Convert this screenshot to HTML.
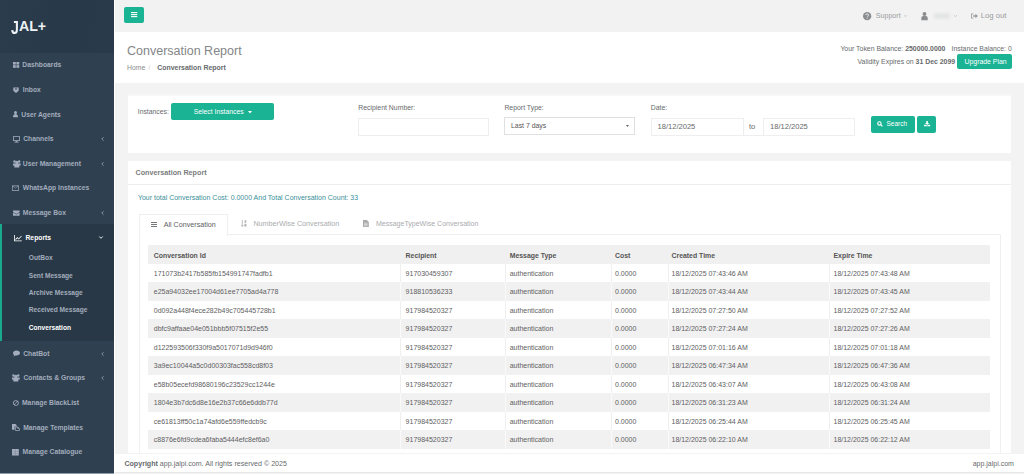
<!DOCTYPE html>
<html><head><meta charset="utf-8"><style>
*{box-sizing:border-box;margin:0;padding:0}
html,body{width:1024px;height:474px;overflow:hidden;background:#f3f3f4;font-family:"Liberation Sans",sans-serif;color:#676a6c}
.a{position:absolute;white-space:nowrap;line-height:10px}
#side{position:absolute;left:0;top:0;width:114px;height:473px;background:#2f4050}
#logo{position:absolute;left:0;top:0;width:114px;height:53px;background:linear-gradient(100deg,#2b3c4c 0%,#283949 50%,#293a4a 100%)}
#active{position:absolute;left:0;top:224px;width:114px;height:117px;background:#293846;border-left:2px solid #19aa8d}
#top{position:absolute;left:114px;top:0;width:910px;height:32.5px;background:#f2f2f2}
.btn{position:absolute;background:#1ab394;border-radius:2px;color:#fff}
#head{position:absolute;left:114px;top:32px;width:910px;height:51px;background:#fff}
.ibox{position:absolute;background:#fff}
.inp{position:absolute;background:#fff;border:1px solid #eeeeee}
svg{position:absolute;overflow:visible}
#foot{position:absolute;left:114px;top:453px;width:910px;height:20px;background:#fff;border-top:1px solid #f3f3f3;border-bottom:1px solid #e8e8e8}
</style></head><body>
<div class="ibox" style="left:128px;top:94px;width:883px;height:59px;border-top:2px solid #f7f7f7"></div><div class="a" style="left:137.8px;top:106.90px;font-size:6.8px">Instances:</div><div class="btn" style="left:171px;top:103px;width:103px;height:17px"></div><div class="a" style="left:193.75px;top:106.60px;font-size:6.8px;color:#fff">Select Instances</div><svg style="left:248px;top:110.5px" width="4" height="3" viewBox="0 0 4 3" fill="#fff"><path d="M0 0h4l-2 2.4z"/></svg><div class="a" style="left:358.2px;top:103.20px;font-size:6.9px">Recipient Number:</div><div class="inp" style="left:357.5px;top:117.5px;width:131px;height:18px"></div><div class="a" style="left:504.4px;top:103.20px;font-size:6.9px">Report Type:</div><div class="inp" style="left:504px;top:117.3px;width:131px;height:17.3px;border-color:#e0e0e0"></div><div class="a" style="left:511px;top:121.30px;font-size:6.9px;color:#555">Last 7 days</div><svg style="left:626px;top:124.5px" width="3" height="2" viewBox="0 0 3 2" fill="#666"><path d="M0 0h3l-1.5 2z"/></svg><div class="a" style="left:650.8px;top:103.20px;font-size:6.9px">Date:</div><div class="inp" style="left:651px;top:117.5px;width:204px;height:18px"></div><div style="position:absolute;left:742.5px;top:118px;width:21px;height:17px;background:#fff;border-left:1px solid #eeeeee;border-right:1px solid #eeeeee"></div><div class="a" style="left:657.5px;top:121.70px;font-size:7.55px;color:#676a6c">18/12/2025</div><div class="a" style="left:749px;top:121.70px;font-size:7.55px;color:#676a6c">to</div><div class="a" style="left:770px;top:121.70px;font-size:7.55px;color:#676a6c">18/12/2025</div><div class="btn" style="left:871px;top:115.5px;width:44px;height:17.6px"></div><svg style="left:877px;top:121.3px" width="6" height="6" viewBox="0 0 6 6" fill="none" stroke="#fff" stroke-width="1.1"><circle cx="2.4" cy="2.4" r="1.7"/><path d="M3.7 3.7L5.4 5.4"/></svg><div class="a" style="left:886.5px;top:119.20px;font-size:6.5px;color:#fff">Search</div><div class="btn" style="left:917.2px;top:115.5px;width:19.3px;height:17.6px"></div><svg style="left:924px;top:120.8px" width="6.2" height="5.4" viewBox="0 0 7 6" fill="#fff"><path d="M2.6 0h1.8v2.2h1.5l-2.4 2.2-2.4-2.2h1.5z"/><path d="M0 4.2h1.8l1.7 1 1.7-1h1.8v1.8h-7z"/></svg><div class="ibox" style="left:128px;top:160.5px;width:883px;height:300px"></div><div style="position:absolute;left:128px;top:184px;width:883px;height:1px;background:#eeeeee"></div><div class="a" style="left:135.5px;top:167.60px;font-size:7.2px;font-weight:700;color:#7a7c7e">Conversation Report</div><div class="a" style="left:137.9px;top:193.40px;font-size:7.0px;color:#3b8f98">Your total Conversation Cost: 0.0000 And Total Conversation Count: 33</div><div style="position:absolute;left:138.5px;top:233.5px;width:862px;height:1px;background:#eeeeee"></div><div style="position:absolute;left:138.5px;top:213.5px;width:89px;height:22px;background:#fff;border:1px solid #efefef;border-bottom:none"></div><div style="position:absolute;left:138.5px;top:234px;width:862px;height:240px;border-left:1px solid #f0f0f0;border-right:1px solid #f0f0f0"></div><svg style="left:151px;top:222px" width="6" height="5" viewBox="0 0 6 5" fill="#676a6c"><rect x="0" y="0" width="6" height="0.9"/><rect x="0" y="2" width="6" height="0.9"/><rect x="0" y="4" width="6" height="0.9"/></svg><div class="a" style="left:163.7px;top:219.80px;font-size:7.15px;color:#5e6062">All Conversation</div><svg style="left:240.7px;top:220.2px" width="6" height="7" viewBox="0 0 6 7"><path d="M1.3 0v6.4M0.2 5.1l1.1 1.4 1.1-1.4" fill="none" stroke="#b0b2b4" stroke-width="0.8"/><rect x="3.6" y="0.2" width="1.6" height="2.6" fill="#b0b2b4"/><rect x="3.4" y="3.8" width="2" height="2.8" fill="#b0b2b4"/></svg><div class="a" style="left:253.4px;top:219.00px;font-size:7.2px;color:#a9abad">NumberWise Conversation</div><svg style="left:363.2px;top:220.2px" width="6" height="7" viewBox="0 0 6 7"><path d="M0 0h3.8l2 2v5h-5.8z" fill="#a9abad"/><path d="M1 3.2h3.6M1 4.5h3.6M1 5.8h3.6" stroke="#fff" stroke-width="0.5"/></svg><div class="a" style="left:376px;top:219.00px;font-size:7.0px;color:#a9abad">MessageTypeWise Conversation</div><div style="position:absolute;left:148px;top:245px;width:842px;height:19.5px;background:#f0f0f0;border-radius:1px"></div><div class="a" style="left:153.8px;top:251.20px;font-size:6.9px;font-weight:700;color:#555">Conversation Id</div><div class="a" style="left:405.6px;top:251.20px;font-size:6.9px;font-weight:700;color:#555">Recipient</div><div class="a" style="left:509.7px;top:251.20px;font-size:6.9px;font-weight:700;color:#555">Message Type</div><div class="a" style="left:615px;top:251.20px;font-size:6.9px;font-weight:700;color:#555">Cost</div><div class="a" style="left:671.5px;top:251.20px;font-size:6.9px;font-weight:700;color:#555">Created Time</div><div class="a" style="left:833.5px;top:251.20px;font-size:6.9px;font-weight:700;color:#555">Expire Time</div><div style="position:absolute;left:148px;top:264.00px;width:842px;height:18.49px;background:#ffffff"></div><div style="position:absolute;left:400px;top:264.00px;width:1px;height:18.49px;background:#efefef"></div><div style="position:absolute;left:505px;top:264.00px;width:1px;height:18.49px;background:#efefef"></div><div style="position:absolute;left:611px;top:264.00px;width:1px;height:18.49px;background:#efefef"></div><div style="position:absolute;left:668px;top:264.00px;width:1px;height:18.49px;background:#efefef"></div><div style="position:absolute;left:829px;top:264.00px;width:1px;height:18.49px;background:#efefef"></div><div class="a" style="left:153.8px;top:269.00px;font-size:7.0px;color:#5e6062">171073b2417b585fb154991747fadfb1</div><div class="a" style="left:405.6px;top:269.00px;font-size:7.0px;color:#5e6062">917030459307</div><div class="a" style="left:509.7px;top:269.00px;font-size:7.0px;color:#5e6062">authentication</div><div class="a" style="left:615px;top:269.00px;font-size:7.0px;color:#5e6062">0.0000</div><div class="a" style="left:671.5px;top:269.00px;font-size:7.0px;color:#5e6062">18/12/2025 07:43:46 AM</div><div class="a" style="left:833.5px;top:269.00px;font-size:7.0px;color:#5e6062">18/12/2025 07:43:48 AM</div><div style="position:absolute;left:148px;top:282.49px;width:842px;height:18.49px;background:#f1f1f1"></div><div style="position:absolute;left:400px;top:282.49px;width:1px;height:18.49px;background:#fafafa"></div><div style="position:absolute;left:505px;top:282.49px;width:1px;height:18.49px;background:#fafafa"></div><div style="position:absolute;left:611px;top:282.49px;width:1px;height:18.49px;background:#fafafa"></div><div style="position:absolute;left:668px;top:282.49px;width:1px;height:18.49px;background:#fafafa"></div><div style="position:absolute;left:829px;top:282.49px;width:1px;height:18.49px;background:#fafafa"></div><div class="a" style="left:153.8px;top:287.49px;font-size:7.0px;color:#5e6062">e25a94032ee17004d61ee7705ad4a778</div><div class="a" style="left:405.6px;top:287.49px;font-size:7.0px;color:#5e6062">918810536233</div><div class="a" style="left:509.7px;top:287.49px;font-size:7.0px;color:#5e6062">authentication</div><div class="a" style="left:615px;top:287.49px;font-size:7.0px;color:#5e6062">0.0000</div><div class="a" style="left:671.5px;top:287.49px;font-size:7.0px;color:#5e6062">18/12/2025 07:43:44 AM</div><div class="a" style="left:833.5px;top:287.49px;font-size:7.0px;color:#5e6062">18/12/2025 07:43:45 AM</div><div style="position:absolute;left:148px;top:300.98px;width:842px;height:18.49px;background:#ffffff"></div><div style="position:absolute;left:400px;top:300.98px;width:1px;height:18.49px;background:#efefef"></div><div style="position:absolute;left:505px;top:300.98px;width:1px;height:18.49px;background:#efefef"></div><div style="position:absolute;left:611px;top:300.98px;width:1px;height:18.49px;background:#efefef"></div><div style="position:absolute;left:668px;top:300.98px;width:1px;height:18.49px;background:#efefef"></div><div style="position:absolute;left:829px;top:300.98px;width:1px;height:18.49px;background:#efefef"></div><div class="a" style="left:153.8px;top:305.98px;font-size:7.0px;color:#5e6062">0d092a448f4ece282b49c705445728b1</div><div class="a" style="left:405.6px;top:305.98px;font-size:7.0px;color:#5e6062">917984520327</div><div class="a" style="left:509.7px;top:305.98px;font-size:7.0px;color:#5e6062">authentication</div><div class="a" style="left:615px;top:305.98px;font-size:7.0px;color:#5e6062">0.0000</div><div class="a" style="left:671.5px;top:305.98px;font-size:7.0px;color:#5e6062">18/12/2025 07:27:50 AM</div><div class="a" style="left:833.5px;top:305.98px;font-size:7.0px;color:#5e6062">18/12/2025 07:27:52 AM</div><div style="position:absolute;left:148px;top:319.47px;width:842px;height:18.49px;background:#f1f1f1"></div><div style="position:absolute;left:400px;top:319.47px;width:1px;height:18.49px;background:#fafafa"></div><div style="position:absolute;left:505px;top:319.47px;width:1px;height:18.49px;background:#fafafa"></div><div style="position:absolute;left:611px;top:319.47px;width:1px;height:18.49px;background:#fafafa"></div><div style="position:absolute;left:668px;top:319.47px;width:1px;height:18.49px;background:#fafafa"></div><div style="position:absolute;left:829px;top:319.47px;width:1px;height:18.49px;background:#fafafa"></div><div class="a" style="left:153.8px;top:324.47px;font-size:7.0px;color:#5e6062">dbfc9affaae04e051bbb5f07515f2e55</div><div class="a" style="left:405.6px;top:324.47px;font-size:7.0px;color:#5e6062">917984520327</div><div class="a" style="left:509.7px;top:324.47px;font-size:7.0px;color:#5e6062">authentication</div><div class="a" style="left:615px;top:324.47px;font-size:7.0px;color:#5e6062">0.0000</div><div class="a" style="left:671.5px;top:324.47px;font-size:7.0px;color:#5e6062">18/12/2025 07:27:24 AM</div><div class="a" style="left:833.5px;top:324.47px;font-size:7.0px;color:#5e6062">18/12/2025 07:27:26 AM</div><div style="position:absolute;left:148px;top:337.96px;width:842px;height:18.49px;background:#ffffff"></div><div style="position:absolute;left:400px;top:337.96px;width:1px;height:18.49px;background:#efefef"></div><div style="position:absolute;left:505px;top:337.96px;width:1px;height:18.49px;background:#efefef"></div><div style="position:absolute;left:611px;top:337.96px;width:1px;height:18.49px;background:#efefef"></div><div style="position:absolute;left:668px;top:337.96px;width:1px;height:18.49px;background:#efefef"></div><div style="position:absolute;left:829px;top:337.96px;width:1px;height:18.49px;background:#efefef"></div><div class="a" style="left:153.8px;top:342.96px;font-size:7.0px;color:#5e6062">d122593506f330f9a5017071d9d946f0</div><div class="a" style="left:405.6px;top:342.96px;font-size:7.0px;color:#5e6062">917984520327</div><div class="a" style="left:509.7px;top:342.96px;font-size:7.0px;color:#5e6062">authentication</div><div class="a" style="left:615px;top:342.96px;font-size:7.0px;color:#5e6062">0.0000</div><div class="a" style="left:671.5px;top:342.96px;font-size:7.0px;color:#5e6062">18/12/2025 07:01:16 AM</div><div class="a" style="left:833.5px;top:342.96px;font-size:7.0px;color:#5e6062">18/12/2025 07:01:18 AM</div><div style="position:absolute;left:148px;top:356.45px;width:842px;height:18.49px;background:#f1f1f1"></div><div style="position:absolute;left:400px;top:356.45px;width:1px;height:18.49px;background:#fafafa"></div><div style="position:absolute;left:505px;top:356.45px;width:1px;height:18.49px;background:#fafafa"></div><div style="position:absolute;left:611px;top:356.45px;width:1px;height:18.49px;background:#fafafa"></div><div style="position:absolute;left:668px;top:356.45px;width:1px;height:18.49px;background:#fafafa"></div><div style="position:absolute;left:829px;top:356.45px;width:1px;height:18.49px;background:#fafafa"></div><div class="a" style="left:153.8px;top:361.45px;font-size:7.0px;color:#5e6062">3a9ec10044a5c0d00303fac558cd8f03</div><div class="a" style="left:405.6px;top:361.45px;font-size:7.0px;color:#5e6062">917984520327</div><div class="a" style="left:509.7px;top:361.45px;font-size:7.0px;color:#5e6062">authentication</div><div class="a" style="left:615px;top:361.45px;font-size:7.0px;color:#5e6062">0.0000</div><div class="a" style="left:671.5px;top:361.45px;font-size:7.0px;color:#5e6062">18/12/2025 06:47:34 AM</div><div class="a" style="left:833.5px;top:361.45px;font-size:7.0px;color:#5e6062">18/12/2025 06:47:36 AM</div><div style="position:absolute;left:148px;top:374.94px;width:842px;height:18.49px;background:#ffffff"></div><div style="position:absolute;left:400px;top:374.94px;width:1px;height:18.49px;background:#efefef"></div><div style="position:absolute;left:505px;top:374.94px;width:1px;height:18.49px;background:#efefef"></div><div style="position:absolute;left:611px;top:374.94px;width:1px;height:18.49px;background:#efefef"></div><div style="position:absolute;left:668px;top:374.94px;width:1px;height:18.49px;background:#efefef"></div><div style="position:absolute;left:829px;top:374.94px;width:1px;height:18.49px;background:#efefef"></div><div class="a" style="left:153.8px;top:379.94px;font-size:7.0px;color:#5e6062">e58b05ecefd98680196c23529cc1244e</div><div class="a" style="left:405.6px;top:379.94px;font-size:7.0px;color:#5e6062">917984520327</div><div class="a" style="left:509.7px;top:379.94px;font-size:7.0px;color:#5e6062">authentication</div><div class="a" style="left:615px;top:379.94px;font-size:7.0px;color:#5e6062">0.0000</div><div class="a" style="left:671.5px;top:379.94px;font-size:7.0px;color:#5e6062">18/12/2025 06:43:07 AM</div><div class="a" style="left:833.5px;top:379.94px;font-size:7.0px;color:#5e6062">18/12/2025 06:43:08 AM</div><div style="position:absolute;left:148px;top:393.43px;width:842px;height:18.49px;background:#f1f1f1"></div><div style="position:absolute;left:400px;top:393.43px;width:1px;height:18.49px;background:#fafafa"></div><div style="position:absolute;left:505px;top:393.43px;width:1px;height:18.49px;background:#fafafa"></div><div style="position:absolute;left:611px;top:393.43px;width:1px;height:18.49px;background:#fafafa"></div><div style="position:absolute;left:668px;top:393.43px;width:1px;height:18.49px;background:#fafafa"></div><div style="position:absolute;left:829px;top:393.43px;width:1px;height:18.49px;background:#fafafa"></div><div class="a" style="left:153.8px;top:398.43px;font-size:7.0px;color:#5e6062">1804e3b7dc6d8e16e2b37c66e6ddb77d</div><div class="a" style="left:405.6px;top:398.43px;font-size:7.0px;color:#5e6062">917984520327</div><div class="a" style="left:509.7px;top:398.43px;font-size:7.0px;color:#5e6062">authentication</div><div class="a" style="left:615px;top:398.43px;font-size:7.0px;color:#5e6062">0.0000</div><div class="a" style="left:671.5px;top:398.43px;font-size:7.0px;color:#5e6062">18/12/2025 06:31:23 AM</div><div class="a" style="left:833.5px;top:398.43px;font-size:7.0px;color:#5e6062">18/12/2025 06:31:24 AM</div><div style="position:absolute;left:148px;top:411.92px;width:842px;height:18.49px;background:#ffffff"></div><div style="position:absolute;left:400px;top:411.92px;width:1px;height:18.49px;background:#efefef"></div><div style="position:absolute;left:505px;top:411.92px;width:1px;height:18.49px;background:#efefef"></div><div style="position:absolute;left:611px;top:411.92px;width:1px;height:18.49px;background:#efefef"></div><div style="position:absolute;left:668px;top:411.92px;width:1px;height:18.49px;background:#efefef"></div><div style="position:absolute;left:829px;top:411.92px;width:1px;height:18.49px;background:#efefef"></div><div class="a" style="left:153.8px;top:416.92px;font-size:7.0px;color:#5e6062">ce61813ff50c1a74afd6e559ffedcb9c</div><div class="a" style="left:405.6px;top:416.92px;font-size:7.0px;color:#5e6062">917984520327</div><div class="a" style="left:509.7px;top:416.92px;font-size:7.0px;color:#5e6062">authentication</div><div class="a" style="left:615px;top:416.92px;font-size:7.0px;color:#5e6062">0.0000</div><div class="a" style="left:671.5px;top:416.92px;font-size:7.0px;color:#5e6062">18/12/2025 06:25:44 AM</div><div class="a" style="left:833.5px;top:416.92px;font-size:7.0px;color:#5e6062">18/12/2025 06:25:45 AM</div><div style="position:absolute;left:148px;top:430.41px;width:842px;height:18.49px;background:#f1f1f1"></div><div style="position:absolute;left:400px;top:430.41px;width:1px;height:18.49px;background:#fafafa"></div><div style="position:absolute;left:505px;top:430.41px;width:1px;height:18.49px;background:#fafafa"></div><div style="position:absolute;left:611px;top:430.41px;width:1px;height:18.49px;background:#fafafa"></div><div style="position:absolute;left:668px;top:430.41px;width:1px;height:18.49px;background:#fafafa"></div><div style="position:absolute;left:829px;top:430.41px;width:1px;height:18.49px;background:#fafafa"></div><div class="a" style="left:153.8px;top:435.41px;font-size:7.0px;color:#5e6062">c8876e6fd9cdea6faba5444efc8ef6a0</div><div class="a" style="left:405.6px;top:435.41px;font-size:7.0px;color:#5e6062">917984520327</div><div class="a" style="left:509.7px;top:435.41px;font-size:7.0px;color:#5e6062">authentication</div><div class="a" style="left:615px;top:435.41px;font-size:7.0px;color:#5e6062">0.0000</div><div class="a" style="left:671.5px;top:435.41px;font-size:7.0px;color:#5e6062">18/12/2025 06:22:10 AM</div><div class="a" style="left:833.5px;top:435.41px;font-size:7.0px;color:#5e6062">18/12/2025 06:22:12 AM</div>
<div id="side"><div id="logo"></div><div class="a" style="left:11px;top:19px;font-size:14.2px;line-height:14px;font-weight:700;color:#eef2f5"><span style="display:inline-block;transform:scaleY(1.3);transform-origin:50% 20%">J</span>AL+</div><div id="active"></div><svg style="left:12.7px;top:62.3px" width="8" height="8" viewBox="0 0 8 8" fill="#a3adbd"><rect x="0" y="0" width="2.8" height="2.6"/><rect x="3.4" y="0" width="2.8" height="2.6"/><rect x="0" y="3.2" width="2.8" height="2.6"/><rect x="3.4" y="3.2" width="2.8" height="2.6"/></svg><div class="a" style="left:22.3px;top:60.20px;font-size:6.75px;font-weight:700;color:#a3adbd">Dashboards</div><svg style="left:13px;top:86.8px" width="8" height="8" viewBox="0 0 8 8" fill="#a3adbd"><path d="M0.3 0.5h5.4v3.2l-2.7 2.2-2.7-2.2z"/><path d="M1.6 1.6h2.8l-1.4 1.4z" fill="#2f4050"/></svg><div class="a" style="left:22.8px;top:85.00px;font-size:6.75px;font-weight:700;color:#a3adbd">Inbox</div><svg style="left:12.7px;top:111.3px" width="8" height="8" viewBox="0 0 8 8" fill="#a3adbd"><circle cx="2.5" cy="1.6" r="1.5"/><path d="M0 6.2c0-2.2 1-3.3 2.5-3.3s2.5 1.1 2.5 3.3z"/></svg><div class="a" style="left:21.3px;top:109.50px;font-size:6.75px;font-weight:700;color:#a3adbd">User Agents</div><svg style="left:12.7px;top:135.8px" width="8" height="8" viewBox="0 0 8 8" fill="#a3adbd"><path d="M0 0.3h7v4.6h-2.6v0.9h1.2v0.6h-4.2v-0.6h1.2v-0.9h-2.6z M0.8 1v3.2h5.4v-3.2z"/></svg><div class="a" style="left:23.2px;top:134.10px;font-size:6.75px;font-weight:700;color:#a3adbd">Channels</div><svg style="left:100.5px;top:137.1px" width="3" height="4" viewBox="0 0 3 4" fill="none" stroke="#a3adbd" stroke-width="0.8"><path d="M2.5 0.3L0.8 2L2.5 3.7"/></svg><svg style="left:12.7px;top:160.2px" width="8" height="8" viewBox="0 0 8 8" fill="#a3adbd"><circle cx="1.5" cy="1.5" r="1.2"/><circle cx="6.2" cy="1.5" r="1.2"/><circle cx="3.85" cy="2.4" r="1.6"/><path d="M0 3.4h7.7v2.2h-1.4v2h-5v-2h-1.3z"/></svg><div class="a" style="left:22.8px;top:158.60px;font-size:6.75px;font-weight:700;color:#a3adbd">User Management</div><svg style="left:100.5px;top:161.6px" width="3" height="4" viewBox="0 0 3 4" fill="none" stroke="#a3adbd" stroke-width="0.8"><path d="M2.5 0.3L0.8 2L2.5 3.7"/></svg><svg style="left:12.2px;top:185.0px" width="8" height="8" viewBox="0 0 8 8" fill="#a3adbd"><path d="M0 0.5h7v5.2h-7z M0.7 1.2v3.8h5.6v-3.8l-2.8 2.2z M1.2 1.2l2.3 1.8 2.3-1.8z" fill-rule="evenodd"/></svg><div class="a" style="left:22.8px;top:183.30px;font-size:6.75px;font-weight:700;color:#a3adbd">WhatsApp Instances</div><svg style="left:12.7px;top:209.6px" width="8" height="8" viewBox="0 0 8 8" fill="#a3adbd"><path d="M0 0.5h6.6v1.4l-3.3 2-3.3-2z"/><path d="M0 2.6l3.3 2 3.3-2v3.2h-6.6z"/></svg><div class="a" style="left:22.8px;top:207.80px;font-size:6.75px;font-weight:700;color:#a3adbd">Message Box</div><svg style="left:100.5px;top:210.8px" width="3" height="4" viewBox="0 0 3 4" fill="none" stroke="#a3adbd" stroke-width="0.8"><path d="M2.5 0.3L0.8 2L2.5 3.7"/></svg><svg style="left:12.7px;top:350.2px" width="8" height="8" viewBox="0 0 8 8" fill="#a3adbd"><path d="M3.5 0.5c2 0 3.5 1.1 3.5 2.5s-1.5 2.5-3.5 2.5c-0.4 0-0.8 0-1.1-0.1l-1.8 1.2 0.5-1.5c-0.7-0.5-1.1-1.2-1.1-2.1 0-1.4 1.5-2.5 3.5-2.5z"/></svg><div class="a" style="left:23.2px;top:348.60px;font-size:6.75px;font-weight:700;color:#a3adbd">ChatBot</div><svg style="left:100.5px;top:351.6px" width="3" height="4" viewBox="0 0 3 4" fill="none" stroke="#a3adbd" stroke-width="0.8"><path d="M2.5 0.3L0.8 2L2.5 3.7"/></svg><svg style="left:12.4px;top:374.4px" width="8" height="8" viewBox="0 0 8 8" fill="#a3adbd"><circle cx="1.5" cy="1.5" r="1.2"/><circle cx="6.2" cy="1.5" r="1.2"/><circle cx="3.85" cy="2.4" r="1.6"/><path d="M0 3.4h7.7v2.2h-1.4v2h-5v-2h-1.3z"/></svg><div class="a" style="left:23.5px;top:373.10px;font-size:6.75px;font-weight:700;color:#a3adbd">Contacts &amp; Groups</div><svg style="left:100.5px;top:376.1px" width="3" height="4" viewBox="0 0 3 4" fill="none" stroke="#a3adbd" stroke-width="0.8"><path d="M2.5 0.3L0.8 2L2.5 3.7"/></svg><svg style="left:12.7px;top:399.7px" width="8" height="8" viewBox="0 0 8 8" fill="#a3adbd"><path d="M2.9 0.2a2.8 2.8 0 1 1 0 5.6a2.8 2.8 0 1 1 0-5.6z M2.9 1a2 2 0 0 0-1.6 3.2l2.8-2.8a2 2 0 0 0-1.2-0.4z M4.5 1.8l-2.8 2.8a2 2 0 0 0 2.8-2.8z" fill-rule="evenodd"/></svg><div class="a" style="left:22.0px;top:397.70px;font-size:6.75px;font-weight:700;color:#a3adbd">Manage BlackList</div><svg style="left:12.4px;top:423.8px" width="8" height="8" viewBox="0 0 8 8" fill="#a3adbd"><path d="M0 0h3.4l1.4 1.4v1h-2.2v3.4h-2.6z"/><path d="M3.2 2.8h2.8l1.7 1.7v2.3h-4.5z M3.9 3.5v2.6h3.1v-1.3h-1.4v-1.3z" fill-rule="evenodd"/></svg><div class="a" style="left:23.2px;top:422.60px;font-size:6.75px;font-weight:700;color:#a3adbd">Manage Templates</div><svg style="left:12.4px;top:448.5px" width="8" height="8" viewBox="0 0 8 8" fill="#a3adbd"><rect x="0" y="0" width="6.8" height="6.5"/><path d="M0.6 2.2h5.6v0.4h-5.6z M0.6 4.2h5.6v0.4h-5.6z M3.2 0.6v5.4h0.4v-5.4z" fill="#6b7787"/></svg><div class="a" style="left:22.6px;top:447.20px;font-size:6.75px;font-weight:700;color:#a3adbd">Manage Catalogue</div><svg style="left:13.7px;top:234.6px" width="8" height="7" viewBox="0 0 8 7" fill="#fff"><path d="M0 0h0.8v5.4h7v0.8h-7.8z"/><path d="M1.3 4.3l2-2.2 1.4 1.3 2.5-2.7 0.6 0.6-3.1 3.3-1.4-1.3-1.5 1.6z"/></svg><div class="a" style="left:25.5px;top:232.80px;font-size:6.75px;font-weight:700;color:#fff">Reports</div><svg style="left:99.3px;top:236px" width="4" height="3" viewBox="0 0 4 3" fill="none" stroke="#fff" stroke-width="0.9"><path d="M0.3 0.5L2 2.3L3.7 0.5"/></svg><div class="a" style="left:28.8px;top:252.80px;font-size:6.6px;font-weight:700;color:#a3adbd">OutBox</div><div class="a" style="left:28.8px;top:270.60px;font-size:6.6px;font-weight:700;color:#a3adbd">Sent Message</div><div class="a" style="left:28.8px;top:288.20px;font-size:6.6px;font-weight:700;color:#a3adbd">Archive Message</div><div class="a" style="left:28.8px;top:304.90px;font-size:6.6px;font-weight:700;color:#a3adbd">Received Message</div><div class="a" style="left:28.8px;top:322.50px;font-size:6.6px;font-weight:700;color:#fff">Conversation</div></div>
<div id="top"><div class="btn" style="left:10px;top:7px;width:20px;height:16px"></div><svg style="left:16.5px;top:11.8px" width="6.3" height="5.2" viewBox="0 0 6 5" fill="#fff"><rect x="0" y="0" width="6" height="1.1"/><rect x="0" y="1.95" width="6" height="1.1"/><rect x="0" y="3.9" width="6" height="1.1"/></svg><svg style="left:748.6px;top:11.6px" width="8.3" height="8.3" viewBox="0 0 9 9"><circle cx="4.5" cy="4.5" r="4.5" fill="#8a8c8e"/><path d="M3 3.4c0-0.9 0.7-1.5 1.5-1.5s1.5 0.6 1.5 1.4c0 1-1.1 1-1.1 1.9" fill="none" stroke="#f3f3f4" stroke-width="1"/><circle cx="4.4" cy="6.6" r="0.6" fill="#f3f3f4"/></svg><div class="a" style="left:761.8px;top:10.60px;font-size:7.1px;color:#999c9e">Support</div><svg style="left:789.5px;top:15px" width="3" height="2" viewBox="0 0 3 2" fill="none" stroke="#aaa" stroke-width="0.6"><path d="M0.2 0.3L1.5 1.6L2.8 0.3"/></svg><svg style="left:807px;top:11.6px" width="7" height="8.2" viewBox="0 0 7 9" fill="#8a8c8e"><circle cx="3.5" cy="2.2" r="2.1"/><path d="M0 9v-2.3c0-1.4 1-2.4 2.3-2.4h2.4c1.3 0 2.3 1 2.3 2.4v2.3z"/></svg><div style="position:absolute;left:820px;top:13px;width:16px;height:6px;background:#e4e5e6;filter:blur(1.2px);border-radius:2px"></div><svg style="left:839.6px;top:15px" width="3" height="2" viewBox="0 0 3 2" fill="none" stroke="#aaa" stroke-width="0.6"><path d="M0.2 0.3L1.5 1.6L2.8 0.3"/></svg><svg style="left:857px;top:12.8px" width="7" height="6" viewBox="0 0 7 6" fill="#999c9e"><path d="M0 0.5h2.4v0.8h-1.6v3.4h1.6v0.8h-2.4z"/><path d="M2.2 2.3h2.2v-1.6l2.6 2.3-2.6 2.3v-1.6h-2.2z"/></svg><div class="a" style="left:866.8px;top:10.80px;font-size:7.7px;color:#999c9e">Log out</div></div>
<div id="head"><div class="a" style="left:13px;top:11px;font-size:12.5px;line-height:16px;color:#848688">Conversation Report</div><div class="a" style="left:13px;top:31.20px;font-size:6.9px;color:#8a8c8e">Home<span style="color:#ccc;padding:0 0 0 3px">/</span></div><div class="a" style="left:43.19999999999999px;top:31.20px;font-size:6.95px;font-weight:700;color:#676a6c">Conversation Report</div><div class="a" style="left:726.4px;top:12.00px;font-size:6.9px">Your Token Balance: <b>250000.0000</b></div><div class="a" style="left:837.6px;top:12.00px;font-size:6.85px">Instance Balance: 0</div><div class="a" style="left:743.5px;top:24.70px;font-size:6.9px">Validity Expires on <b>31 Dec 2099</b></div><div class="btn" style="left:842.6px;top:22.1px;width:55px;height:14.6px"></div><div class="a" style="left:850.5px;top:25.30px;font-size:6.9px;color:#fff">Upgrade Plan</div></div>
<div id="foot"><div class="a" style="left:10.400000000000006px;top:4.60px;font-size:7.1px"><b>Copyright</b> app.jalpi.com. All rights reserved © 2025</div><div class="a" style="left:858.7px;top:4.60px;font-size:7.0px">app.jalpi.com</div></div><div style="position:absolute;left:0;top:473px;width:114px;height:1px;background:#8c9cab"></div><div style="position:absolute;left:114px;top:0;width:1px;height:473px;background:#fff"></div>
</body></html>
